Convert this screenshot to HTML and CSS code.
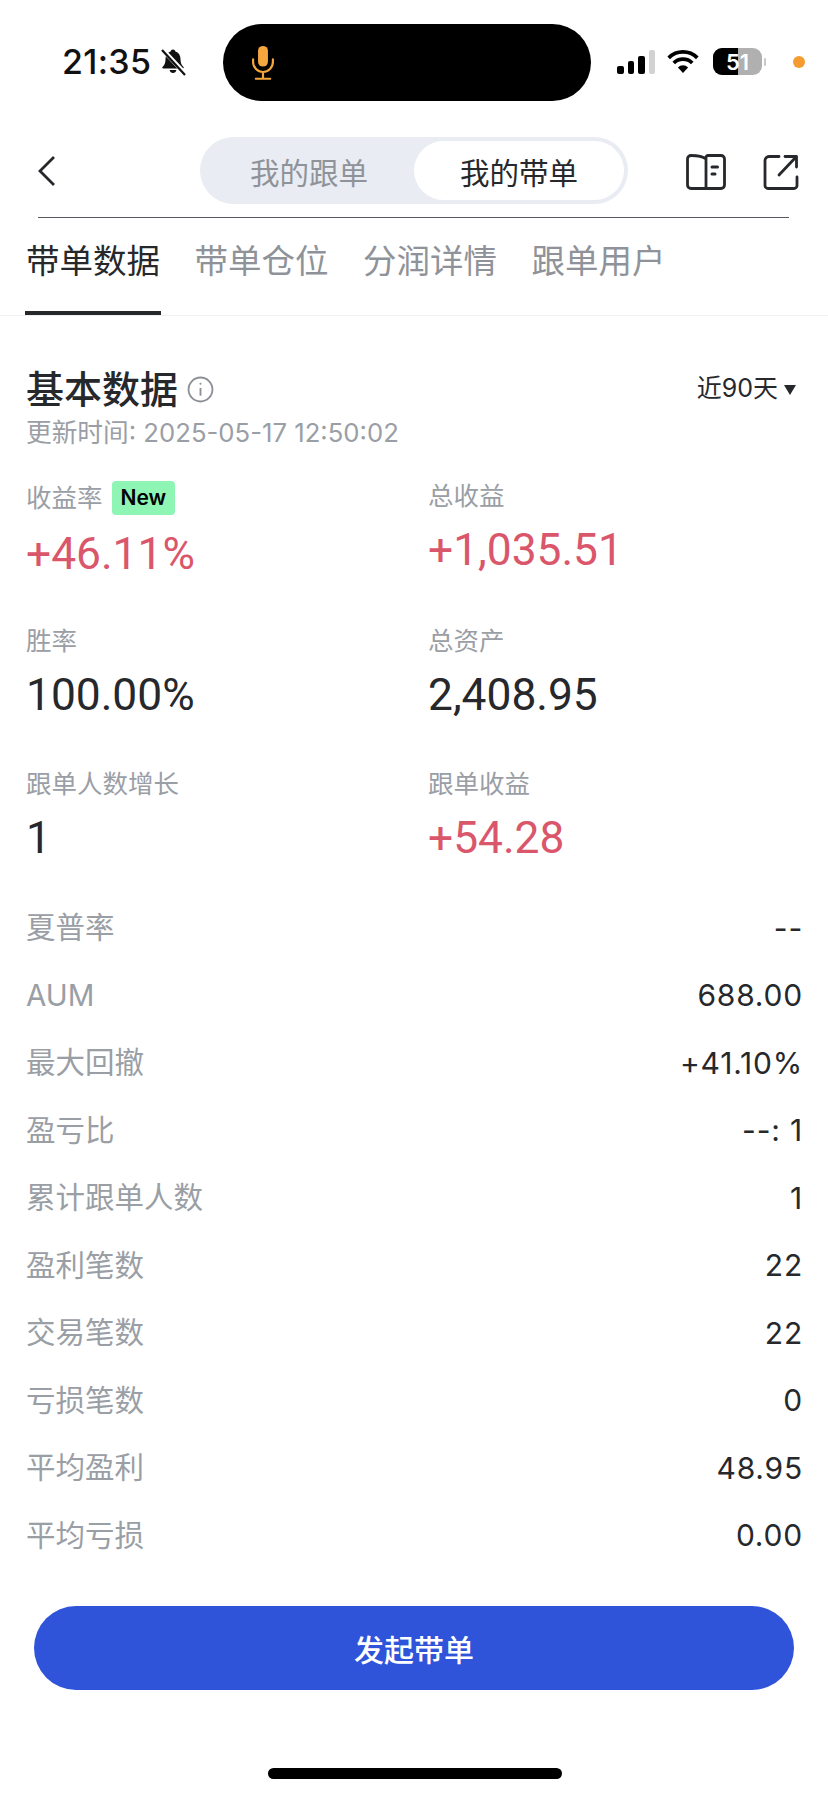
FILE: index.html
```html
<!DOCTYPE html>
<html lang="zh-CN">
<head>
<meta charset="utf-8">
<title>我的带单</title>
<link rel="stylesheet" href="styles.css">
</head>
<body>
<div class="screen">
  <header class="status">
    <div class="status-left">
      <span class="clock">21:35</span>
      <svg class="bell" viewBox="0 0 28 28"><path d="M14 1.500c1.300 0 2.200.900 2.400 2 3.300 1 5.100 3.800 5.100 7.500 0 4.200 1 6 3 8 .5.600.2 1.500-.7 1.500H4.200c-.9 0-1.200-.9-.7-1.500 2-2 3-3.800 3-8 0-3.700 1.800-6.500 5.100-7.500.2-1.100 1.100-2 2.400-2zM10.600 22h6.800c-.3 1.900-1.700 3-3.400 3s-3.100-1.100-3.400-3z" fill="#111"/><path d="M3.500 1.500 25.500 25" stroke="#fff" stroke-width="4.500"/><path d="M3 2l23 25" stroke="#111" stroke-width="2.200"/></svg>
    </div>
    <div class="island">
      <svg class="mic" viewBox="0 0 26 40" fill="none" stroke="#f5a63c" stroke-width="2.400"><rect x="7.500" y="1" width="11" height="23" rx="5.500" fill="#f5a63c" stroke="none"/><path d="M2 16v3a11 11 0 0 0 22 0v-3M13 30v7M5 37.500h16" stroke-linecap="round"/></svg>
    </div>
    <div class="status-right">
      <div class="signal"><i class="s1"></i><i class="s2"></i><i class="s3"></i><i class="s4"></i></div>
      <svg class="wifi" viewBox="0 0 34 26"><path d="M1.500 8.500a22 22 0 0 1 31 0" fill="none" stroke="#000" stroke-width="4"/><path d="M7 14a14 14 0 0 1 20 0" fill="none" stroke="#000" stroke-width="4"/><path d="M11.500 19a7.500 7.500 0 0 1 11 0L17 25z" fill="#000"/></svg>
      <div class="battery"><span class="batt-fill"></span><span class="batt-num">51</span></div>
      <span class="batt-cap"></span>
      <span class="dot"></span>
    </div>
  </header>

  <nav class="topbar">
    <svg class="back" viewBox="0 0 20 32" fill="none" stroke="#26282c" stroke-width="2.800"><path d="M17 2 3 16l14 14"/></svg>
    <div class="segment">
      <span class="seg-item">我的跟单</span>
      <span class="seg-item seg-active">我的带单</span>
    </div>
    <div class="actions">
      <svg class="book" viewBox="0 0 40 36" fill="none" stroke="#26282c" stroke-width="2.800" stroke-linejoin="round"><path d="M20 5C17 2.500 12 1.500 5 1.500 3 1.500 1.500 3 1.500 5v26c0 2 1.500 3.500 3.500 3.500h30c2 0 3.500-1.500 3.500-3.500V5c0-2-1.500-3.500-3.500-3.500H22A2 2 0 0 0 20 3.500zM20 4v30"/><path d="M26 13h5.500M26 20h3" stroke-linecap="round" stroke-width="3"/></svg>
      <svg class="share" viewBox="0 0 36 36" fill="none" stroke="#26282c" stroke-width="2.800" stroke-linecap="round" stroke-linejoin="round"><path d="M16 2.500H6A4 4 0 0 0 2 6.500v25a3 3 0 0 0 3 3h26a3 3 0 0 0 3-3V23"/><path d="M16 21 33 3M22 2.500h11.500V13"/></svg>
    </div>
  </nav>
  <div class="rule"></div>

  <div class="tabs">
    <span class="tab tab-active">带单数据</span>
    <span class="tab">带单仓位</span>
    <span class="tab">分润详情</span>
    <span class="tab">跟单用户</span>
  </div>

  <main class="content">
    <div class="head">
      <div class="head-title">
        <h1>基本数据</h1>
        <svg class="info" viewBox="0 0 26 26" fill="none" stroke="#8d9096" stroke-width="1.800"><circle cx="13" cy="13" r="11.500"/><path d="M13 11.500v7.500"/><circle cx="13" cy="7.500" r="1" fill="#8d9096" stroke="none"/></svg>
      </div>
      <div class="range">近90天<span class="caret"></span></div>
    </div>
    <p class="updated">更新时间: 2025-05-17 12:50:02</p>

    <section class="stats">
      <div class="stat">
        <div class="stat-label">收益率<span class="badge">New</span></div>
        <div class="stat-value up">+46.11%</div>
      </div>
      <div class="stat">
        <div class="stat-label">总收益</div>
        <div class="stat-value up">+1,035.51</div>
      </div>
      <div class="stat">
        <div class="stat-label">胜率</div>
        <div class="stat-value">100.00%</div>
      </div>
      <div class="stat">
        <div class="stat-label">总资产</div>
        <div class="stat-value">2,408.95</div>
      </div>
      <div class="stat">
        <div class="stat-label">跟单人数增长</div>
        <div class="stat-value">1</div>
      </div>
      <div class="stat">
        <div class="stat-label">跟单收益</div>
        <div class="stat-value up">+54.28</div>
      </div>
    </section>

    <section class="list">
      <div class="row"><span class="row-label">夏普率</span><b>--</b></div>
      <div class="row"><span>AUM</span><b>688.00</b></div>
      <div class="row"><span class="row-label">最大回撤</span><b>+41.10%</b></div>
      <div class="row"><span class="row-label">盈亏比</span><b>--: 1</b></div>
      <div class="row"><span class="row-label">累计跟单人数</span><b>1</b></div>
      <div class="row"><span class="row-label">盈利笔数</span><b>22</b></div>
      <div class="row"><span class="row-label">交易笔数</span><b>22</b></div>
      <div class="row"><span class="row-label">亏损笔数</span><b>0</b></div>
      <div class="row"><span class="row-label">平均盈利</span><b>48.95</b></div>
      <div class="row"><span class="row-label">平均亏损</span><b>0.00</b></div>
    </section>

    <button class="cta">发起带单</button>
  </main>
  <div class="home"></div>
</div>
</body>
</html>
```
FILE: styles.css
```css
* { box-sizing: border-box; }
html, body { margin: 0; padding: 0; background: #fff; }
body { font-family: Inter, "Noto Sans CJK SC", sans-serif; color: #26282c; }
.screen { width: 828px; height: 1796px; overflow: hidden; background: #fff; }

.status { height: 101px; padding-top: 24px; display: flex; align-items: flex-start; }
.status-left { width: 223px; height: 76px; padding-left: 62px; display: flex; align-items: center; gap: 8px; }
.clock { font-size: 34px; font-weight: 500; color: #111; line-height: 1; letter-spacing: .3px; }
.bell { width: 28px; height: 28px; }
.island { width: 368px; height: 77px; border-radius: 39px; background: #000; padding-left: 27px; display: flex; align-items: center; }
.mic { width: 26px; height: 36px; }
.status-right { flex: 1; height: 75px; display: flex; align-items: center; padding-left: 26px; }
.signal { display: flex; align-items: flex-end; gap: 4px; height: 24px; }
.signal i { display: block; width: 6.500px; border-radius: 2px; background: #000; }
.s1 { height: 8px; }
.s2 { height: 13px; }
.s3 { height: 18px; }
.signal .s4 { height: 24px; background: #d2d2d2; }
.wifi { width: 32px; height: 24px; margin-left: 12px; }
.battery { width: 49px; height: 27px; margin-left: 14px; border-radius: 9px; background: #b0b0b0; position: relative; overflow: hidden; display: flex; align-items: center; justify-content: center; }
.batt-fill { position: absolute; left: 0; top: 0; bottom: 0; width: 25px; background: #000; }
.batt-num { position: relative; color: #fff; font-size: 22px; font-weight: 600; line-height: 1; }
.batt-cap { width: 2px; height: 8px; margin-left: 2px; background: #c8c8c8; border-radius: 1px; }
.dot { width: 12px; height: 12px; margin-left: 27px; border-radius: 50%; background: #f59b30; }

.topbar { height: 116px; padding-top: 36px; display: flex; align-items: flex-start; }
.back { width: 20px; height: 32px; margin: 18px 0 0 37px; }
.segment { width: 428px; height: 67px; margin-left: 143px; padding: 4px; border-radius: 34px; background: #e9ecf2; display: flex; }
.seg-item { width: 210px; display: flex; align-items: center; justify-content: center; font-size: 29.500px; color: #8f9399; }
.seg-active { margin-left: auto; height: 59px; border-radius: 30px; background: #fff; color: #26282c; }
.actions { display: flex; gap: 37px; margin: 17px 0 0 58px; }
.book { width: 40px; height: 36px; }
.share { width: 36px; height: 36px; }

.rule { height: 1px; margin: 0 39px 0 38px; background: #55585c; }
.tabs { height: 98px; padding: 0 25px; display: flex; gap: 32.500px; border-bottom: 1px solid #eff0f2; }
.tab { height: 97px; padding: 23px 1px 0; font-size: 33.500px; line-height: 40px; color: #8f9399; border-bottom: 4px solid transparent; }
.tab-active { color: #26282c; border-bottom-color: #26282c; }

.content { padding: 0 26px; }
.head { display: flex; justify-content: space-between; align-items: center; margin-top: 48px; }
.head-title { display: flex; align-items: center; gap: 9px; }
h1 { margin: 0; font-size: 38px; font-weight: 500; line-height: 50px; color: #26282c; }
.info { width: 27px; height: 27px; }
.range { display: flex; align-items: center; gap: 6px; font-size: 25px; margin: 0 6px 6px 0; }
.caret { width: 0; height: 0; margin-top: 8px; border-left: 6px solid transparent; border-right: 6px solid transparent; border-top: 10px solid #26282c; }
.updated { margin: 4px 0 0; font-size: 25.700px; line-height: 30px; color: #9a9ea5; }

.stats { display: grid; grid-template-columns: 402px 1fr; grid-template-rows: 96px 94px 94px; margin-top: 33px; row-gap: 49px; }
.stat-label { display: flex; align-items: center; gap: 9px; font-size: 25.500px; line-height: 30px; color: #9a9ea5; }
.badge { height: 34px; padding: 0 9px; border-radius: 4px; background: #8ef5b5; color: #000; font-size: 21px; line-height: 34px; font-weight: 600; }
.stat-value { margin-top: 14px; font-family: Roboto, sans-serif; font-size: 44.300px; line-height: 50px; font-weight: 450; color: #26282c; }
.up { color: #da566b; }

.list { margin-top: 31px; }
.row { height: 67.500px; display: flex; justify-content: space-between; align-items: center; font-size: 29.500px; color: #9a9ea5; }
.row-label { margin-bottom: 5px; }
.row b { margin-right: -1px; font-weight: 400; font-size: 30px; color: #26282c; letter-spacing: .8px; }

.cta { display: block; width: 760px; height: 84px; margin: 37px 0 0 8px; border: 0; border-radius: 42px; background: #2f54da; color: #fff; font-family: inherit; font-size: 30px; font-weight: 500; }
.home { width: 294px; height: 11px; margin: 78px 0 0 268px; border-radius: 6px; background: #000; }
```
